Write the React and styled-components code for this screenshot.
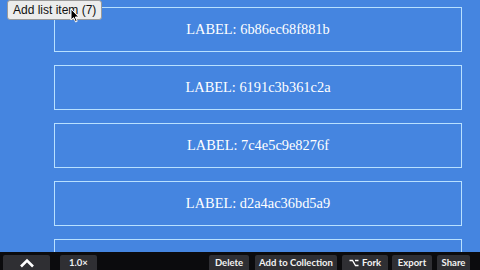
import React from "react";
import styled, { createGlobalStyle } from "styled-components";

const Global = createGlobalStyle`
  html, body { margin: 0; padding: 0; }
  body {
    background: #4585e0;
    width: 480px;
    height: 270px;
    overflow: hidden;
    font-family: "Liberation Serif", "Times New Roman", serif;
  }
`;

const Page = styled.div`
  position: relative;
  width: 480px;
  height: 270px;
  overflow: hidden;
`;

const List = styled.div`
  display: flex;
  flex-direction: column;
  gap: 13px;
  padding: 7px 0 0 54px;
  width: 408px;
`;

const Card = styled.div`
  box-sizing: border-box;
  height: 45px;
  border: 1px solid #b8e0ff;
  display: flex;
  align-items: center;
  justify-content: center;
  color: #ffffff;
  font-family: "Liberation Serif", "Times New Roman", serif;
  font-size: 14.4px;
`;

const AddButton = styled.button`
  position: absolute;
  left: 7px;
  top: 0;
  height: 20px;
  padding: 0 5px;
  background: #ececec;
  border: 1px solid #9a9a9a;
  border-radius: 3px;
  font-family: "Liberation Sans", Arial, sans-serif;
  font-size: 12px;
  color: #111;
  line-height: 18px;
`;

const Cursor = styled.svg`
  position: absolute;
  left: 70px;
  top: 8px;
`;

const Toolbar = styled.div`
  position: absolute;
  left: 0;
  right: 0;
  bottom: 0;
  height: 18px;
  background: #0b0b0d;
  display: flex;
  align-items: flex-end;
  padding: 0 10px 0 3px;
  gap: 5px;
`;

const ToolButton = styled.div`
  box-sizing: border-box;
  height: 15px;
  width: ${(p) => p.$w}px;
  background: #2f2f33;
  border-radius: 2px 2px 0 0;
  color: #f2f2f2;
  font-family: Lato, "Open Sans", sans-serif;
  font-size: 9.5px;
  font-weight: 700;
  display: flex;
  align-items: center;
  justify-content: center;
  gap: 3px;
  white-space: nowrap;
  margin-right: ${(p) => p.$mr || 0}px;
`;

const Spacer = styled.div`
  flex: 1;
`;

const labels = [
  "6b86ec68f881b",
  "6191c3b361c2a",
  "7c4e5c9e8276f",
  "d2a4ac36bd5a9",
  "",
];

export default function App() {
  return (
    <Page>
      <Global />
      <List>
        {labels.map((l, i) => (
          <Card key={i}>{l ? `LABEL: ${l}` : ""}</Card>
        ))}
      </List>
      <AddButton>Add list item (7)</AddButton>
      <Cursor width="10" height="15" viewBox="0 0 10 15">
        <path d="M1 1 L1 12 L3.6 9.6 L5.6 14 L7.2 13.3 L5.3 9 L8.8 9 Z" fill="#000" stroke="#fff" strokeWidth="1" />
      </Cursor>
      <Toolbar>
        <ToolButton $w={47} $mr={5}>
          <svg width="16" height="10" viewBox="0 0 16 10">
            <path d="M2 8.5 L8 2.5 L14 8.5" fill="none" stroke="#fff" strokeWidth="2.6" />
          </svg>
        </ToolButton>
        <ToolButton $w={37}>1.0×</ToolButton>
        <Spacer />
        <ToolButton $w={40} $mr={1}>Delete</ToolButton>
        <ToolButton $w={82}>Add to Collection</ToolButton>
        <ToolButton $w={46} $mr={-1}>
          <svg width="10" height="8" viewBox="0 0 10 8">
            <path d="M0.5 1.5 H3.5 L6.5 6.5 H9.5 M6 1.5 H9.5" fill="none" stroke="#fff" strokeWidth="1.3" />
          </svg>
          Fork
        </ToolButton>
        <ToolButton $w={40}>Export</ToolButton>
        <ToolButton $w={33}>Share</ToolButton>
      </Toolbar>
    </Page>
  );
}
